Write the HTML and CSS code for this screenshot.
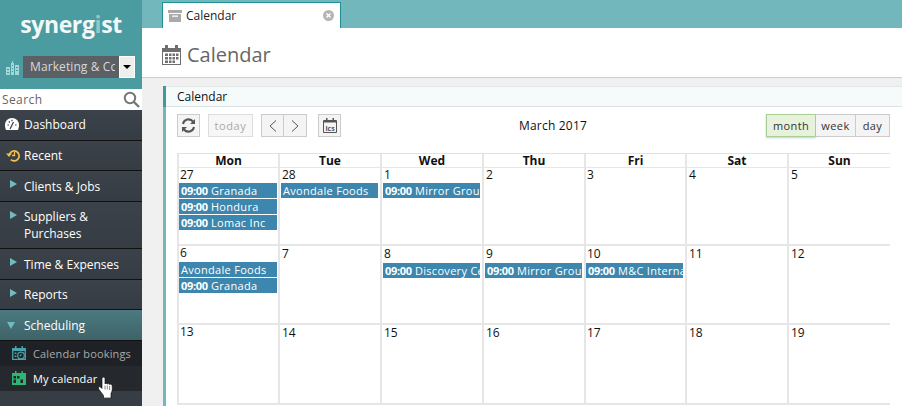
FILE: index.html
```html
<!DOCTYPE html>
<html lang="en">
<head>
<meta charset="utf-8">
<title>Calendar</title>
<link rel="stylesheet" href="styles.css">
</head>
<body>
<div class="app">
  <aside class="sidebar">
    <div class="brand">
      <div class="logo">synerg<span class="logo-i">i</span>st</div>
      <div class="company">
        <svg class="company-icon" width="13" height="14" viewBox="0 0 13 14"><path fill="#a5d5d6" d="M0 6h4v8H0zM5 2h1V0h1v2h1v12H5zM9 4h4v10H9z"/><path fill="#4a9ca0" d="M1 8h2v1H1zM1 11h2v1H1zM6 4h1v1H6zM6 7h1v1H6zM6 10h1v1H6zM10 6h2v1h-2zM10 9h2v1h-2z"/></svg>
        <div class="company-select"><span class="company-name">Marketing &amp; Cc</span><span class="company-arrow"><i></i></span></div>
      </div>
    </div>
    <div class="search">
      <span>Search</span>
      <svg width="17" height="17" viewBox="0 0 17 17"><circle cx="7" cy="7" r="5.2" fill="none" stroke="#777" stroke-width="2"/><path d="M11 11l5 5" stroke="#777" stroke-width="2.4"/></svg>
    </div>
    <nav class="nav">
      <a class="nav-item nav-first">
        <svg class="nav-icon" width="14" height="12" viewBox="0 0 14 12"><path fill="#fff" d="M7 0C3 0 0 3 0 7c0 2 .4 3.500 1 5h12c.6-1.500 1-3 1-5 0-4-3-7-7-7z"/><path d="M2.500 7h1.500M7 1.800v1.500M11.500 7H10M3.800 3.500l1 1M5 11l3.500-7" stroke="#373d44" stroke-width="1.200" fill="none"/></svg>
        <span>Dashboard</span>
      </a>
      <a class="nav-item nav-short">
        <svg class="nav-icon nav-icon-recent" width="14" height="13" viewBox="0 0 14 13"><path fill="none" stroke="#f2c14e" stroke-width="1.700" d="M3.500 5a5 5 0 1 1 1.300 5.700"/><path fill="#f2c14e" d="M0 4.500h6L3 8z"/><path fill="none" stroke="#f2c14e" stroke-width="1.300" d="M8.500 3v3.500H6"/></svg>
        <span>Recent</span>
      </a>
      <a class="nav-item"><i class="tri"></i><span>Clients &amp; Jobs</span></a>
      <a class="nav-item nav-tall"><i class="tri"></i><span>Suppliers &amp;<br>Purchases</span></a>
      <a class="nav-item"><i class="tri"></i><span>Time &amp; Expenses</span></a>
      <a class="nav-item nav-short"><i class="tri"></i><span>Reports</span></a>
      <a class="nav-item nav-open"><i class="tri-down"></i><span>Scheduling</span></a>
      <div class="subnav">
        <a class="sub-item">
          <svg width="14" height="14" viewBox="0 0 14 14"><path fill="none" stroke="#4aa3a8" stroke-width="1.300" d="M.7 2.700h12.600v10.600H.7z"/><path fill="#4aa3a8" d="M3 0h1.500v3H3zM9.500 0H11v3H9.500zM1 3h12v2H1z"/><path fill="#4aa3a8" d="M2.500 6.500h2v1.500h-2zM2.500 9.500h2V11h-2z"/><circle cx="9" cy="9.500" r="3.300" fill="#1e2126" stroke="#4aa3a8" stroke-width="1.200"/><path fill="none" stroke="#4aa3a8" d="M9 7.800v1.900H7.500"/></svg>
          <span>Calendar bookings</span>
        </a>
        <a class="sub-item sub-active">
          <svg width="14" height="14" viewBox="0 0 14 14"><path fill="#2fb574" d="M0 2h14v12H0z"/><path fill="#2fb574" d="M3 0h1.500v3H3zM9.500 0H11v3H9.500z"/><path fill="#23272c" d="M1.500 5h2.500v2.500H1.500zM5 5h2.500v2.500H5zM8.500 8.500H11V12H8.500zM1.500 8.500H4V12H1.500z"/></svg>
          <span>My calendar</span>
        </a>
      </div>
    </nav>
  </aside>
  <div class="main">
    <div class="tabbar">
      <div class="tab">
        <svg width="14" height="12" viewBox="0 0 14 12"><path fill="#aaa" d="M0 0h14v3H0zM1 4h12v8H1z"/><path fill="#fff" d="M4 5.500h6v1.300H4z"/></svg>
        <span class="tab-label">Calendar</span>
        <span class="tab-close">
          <svg width="11" height="11" viewBox="0 0 11 11"><circle cx="5.500" cy="5.500" r="5.500" fill="#b5b5b5"/><path d="M3.500 3.500l4 4M7.500 3.500l-4 4" stroke="#fff" stroke-width="1.400"/></svg>
        </span>
      </div>
    </div>
    <header class="page-head">
      <svg width="19" height="20" viewBox="0 0 19 20"><path fill="#6e6e6e" d="M0 3h19v17H0z"/><path fill="#6e6e6e" d="M3 0h3v4H3zM13 0h3v4h-3z"/><path fill="#fff" d="M1 7h17v12H1z"/><path fill="#6e6e6e" d="M3 8.500h3v2.500H3zM7 8.500h2.500v2.500H7zM10.500 8.500h2.500v2.500h-2.500zM14 8.500h2.500v2.500H14zM3 12h3v2.500H3zM7 12h2.500v2.500H7zM10.500 12h2.500v2.500h-2.500zM14 12h2.500v2.500H14zM3 15.500h3V18H3zM7 15.500h2.500V18H7zM10.500 15.500h2.500V18h-2.500z"/></svg>
      <h1>Calendar</h1>
    </header>
    <div class="content">
      <section class="panel">
        <div class="panel-head">Calendar</div>
        <div class="panel-body">
          <div class="toolbar">
            <div class="tools-left">
              <button class="btn btn-icon">
                <svg width="15" height="15" viewBox="0 0 15 15"><path fill="none" stroke="#555" stroke-width="2" d="M2 6a5.700 5.700 0 0 1 10-2.500M13 9a5.700 5.700 0 0 1-10 2.500"/><path fill="#555" d="M14 1v5H9zM1 14V9h5z"/></svg>
              </button>
              <button class="btn btn-today">today</button>
              <div class="btn-group">
                <button class="btn btn-icon"><svg width="8" height="12" viewBox="0 0 8 12"><path fill="none" stroke="#555" d="M7 .5L1 6l6 5.500"/></svg></button>
                <button class="btn btn-icon btn-joined"><svg width="8" height="12" viewBox="0 0 8 12"><path fill="none" stroke="#555" d="M1 .5L7 6l-6 5.500"/></svg></button>
              </div>
              <button class="btn btn-icon btn-ics">
                <svg width="14" height="15" viewBox="0 0 14 15"><path fill="none" stroke="#555" d="M.5 2.500h13v12H.5z"/><path fill="#555" d="M3 0h1.500v3H3zM9.500 0H11v3H9.500zM1 3h12v1.500H1z"/><text class="ics-text" x="7" y="12.500" text-anchor="middle">ics</text></svg>
              </button>
            </div>
            <div class="cal-title">March 2017</div>
            <div class="view-group">
              <button class="view view-active">month</button>
              <button class="view">week</button>
              <button class="view">day</button>
            </div>
          </div>
          <div class="cal">
            <div class="dow">Mon</div><div class="dow">Tue</div><div class="dow">Wed</div><div class="dow">Thu</div><div class="dow">Fri</div><div class="dow">Sat</div><div class="dow">Sun</div>

            <div class="day row-1"><div class="num">27</div><div class="ev"><b>09:00</b> Granada</div><div class="ev"><b>09:00</b> Hondura</div><div class="ev"><b>09:00</b> Lomac Inc</div></div>
            <div class="day row-1"><div class="num">28</div><div class="ev">Avondale Foods</div></div>
            <div class="day row-1"><div class="num">1</div><div class="ev"><b>09:00</b> Mirror Group</div></div>
            <div class="day row-1"><div class="num">2</div></div>
            <div class="day row-1"><div class="num">3</div></div>
            <div class="day row-1"><div class="num">4</div></div>
            <div class="day row-1"><div class="num">5</div></div>

            <div class="day row-2"><div class="num">6</div><div class="ev">Avondale Foods</div><div class="ev"><b>09:00</b> Granada</div></div>
            <div class="day row-2"><div class="num">7</div></div>
            <div class="day row-2"><div class="num">8</div><div class="ev"><b>09:00</b> Discovery Ce</div></div>
            <div class="day row-2"><div class="num">9</div><div class="ev"><b>09:00</b> Mirror Group</div></div>
            <div class="day row-2"><div class="num">10</div><div class="ev"><b>09:00</b> M&amp;C Interna</div></div>
            <div class="day row-2"><div class="num">11</div></div>
            <div class="day row-2"><div class="num">12</div></div>

            <div class="day row-3"><div class="num">13</div></div>
            <div class="day row-3"><div class="num">14</div></div>
            <div class="day row-3"><div class="num">15</div></div>
            <div class="day row-3"><div class="num">16</div></div>
            <div class="day row-3"><div class="num">17</div></div>
            <div class="day row-3"><div class="num">18</div></div>
            <div class="day row-3"><div class="num">19</div></div>
          </div>
        </div>
      </section>
    </div>
  </div>
</div>
<svg class="cursor" width="16" height="21" viewBox="0 0 16 21"><path fill="#fff" stroke="#000" stroke-width=".6" stroke-linejoin="round" d="M4 1.500c0-1.800 3-1.800 3 0V7c.5-1 2-1 2.300.2.500-.9 2-.8 2.300.4.500-.7 2.200-.5 2.400.7.600 3.200.3 6-1 8.200V21H5.500v-2.500L.6 12c-1-1.500.8-3 2.100-1.800L4 11.500z"/><path d="M7 8.500v4M9.300 8.500v4M11.600 9v4" stroke="#555" stroke-width=".7"/></svg>
</body>
</html>
```
FILE: styles.css
```css
* { box-sizing: border-box; }
html, body { margin: 0; padding: 0; height: 100%; overflow: hidden; }
body { font-family: "Open Sans", sans-serif; font-size: 12px; color: #222; position: relative; }
.app { display: flex; width: 902px; height: 406px; overflow: hidden; }

.sidebar { width: 142px; flex: none; background: #373d44; display: flex; flex-direction: column; }
.brand { height: 89px; background: #4a9ca0; padding-top: 8px; }
.logo { font-weight: 700; font-size: 23px; line-height: 32px; color: #f2f8f8; text-align: center; letter-spacing: -.4px; }
.logo-i { color: #8fc8ca; }
.company { display: flex; align-items: center; margin-top: 16px; padding-left: 6px; }
.company-icon { flex: none; margin-top: 2px; }
.company-select { display: flex; width: 112px; height: 22px; margin-left: 4px; background: #5b6065; }
.company-name { flex: 1; min-width: 0; overflow: hidden; white-space: nowrap; margin: 0 4px 0 7px; line-height: 22px; color: #d8d8d8; font-size: 12px; letter-spacing: .1px; }
.company-arrow { flex: none; width: 16px; background: #eee; border: 1px solid #fff; display: flex; align-items: center; justify-content: center; }
.company-arrow i { border: 4px solid transparent; border-top: 4px solid #000; border-bottom: 0; }

.search { height: 21px; background: #fff; display: flex; align-items: center; justify-content: space-between; padding: 0 2px; color: #666; font-size: 12px; letter-spacing: .4px; }

.nav { display: flex; flex-direction: column; flex: 1; color: #fff; }
.nav-item { display: flex; align-items: center; height: 31px; padding-left: 24px; position: relative; border-bottom: 1px solid #111; font-size: 12px; background: linear-gradient(#3c4249, #363c43); }
.nav-first { padding-bottom: 1px; }
.nav-tall { height: 47px; line-height: 17px; }
.nav-short { height: 30px; padding-bottom: 1px; }
.nav-icon { position: absolute; left: 5px; top: 8px; }
.nav-icon-recent { left: 6px; }
.tri { position: absolute; left: 10px; top: 9px; border: 4.500px solid transparent; border-left: 7px solid #6fbcc0; border-right: 0; }
.tri-down { position: absolute; left: 7px; top: 12px; border: 4.500px solid transparent; border-top: 7px solid #6fbcc0; border-bottom: 0; }
.nav-open { background: linear-gradient(#4b7a80, #3e6368); }
.subnav { display: flex; flex-direction: column; }
.sub-item { display: flex; align-items: center; height: 25px; padding: 0 0 1px 12px; gap: 7px; background: #1e2126; color: #aaa; font-size: 11px; letter-spacing: .15px; white-space: nowrap; }
.sub-active { background: #25292e; color: #fff; }

.main { flex: 1; min-width: 0; display: flex; flex-direction: column; background: #f0f0f0; }
.tabbar { height: 28px; background: #71b7bb; padding: 2px 0 0 20px; flex: none; }
.tab { width: 179px; height: 26px; background: #fff; border: 1px solid #1c9298; border-bottom: 0; display: flex; align-items: center; padding: 0 6px 0 5px; gap: 4px; color: #222; }
.tab-label { flex: 1; font-size: 12px; }
.tab-close { display: flex; }

.page-head { height: 50px; flex: none; background: #fff; border-bottom: 1px solid #c9cdd4; display: flex; align-items: center; gap: 6px; padding: 4px 0 0 20px; }
.page-head h1 { margin: 0; font-size: 20px; font-weight: 400; color: #666; }

.content { flex: 1; min-height: 0; padding: 8px 0 0 21px; }
.panel { background: #fff; border-left: 3px solid #71b7bb; height: 100%; }
.panel-head { height: 21px; background: #f5fbfb; border-top: 1px solid #e4e8e8; border-bottom: 1px solid #dfe3e3; padding-left: 11px; line-height: 19px; font-size: 12px; color: #111; position: relative; }
.panel-head::before { content: ""; position: absolute; left: -3px; top: -1px; width: 3px; height: 21px; background: #3f999e; }
.panel-body { padding: 7px 12px 0 11px; }

.toolbar { display: flex; align-items: center; justify-content: space-between; height: 23px; position: relative; }
.tools-left { display: flex; gap: 8px; align-items: stretch; }
.btn { height: 23px; border: 1px solid #ccc; background: #f4f4f4; padding: 0; display: flex; align-items: center; justify-content: center; font-family: inherit; }
.btn-icon { width: 23px; }
.btn-today { width: 45px; color: #aaa; font-size: 11px; letter-spacing: .6px; background: #f7f7f7; border-color: #ddd; }
.btn-group { display: flex; }
.btn-joined { border-left: 0; }
.btn-ics { margin-left: 3px; }
.ics-text { font-size: 7px; font-weight: 700; fill: #555; }
.cal-title { position: absolute; left: 342px; top: 3px; font-size: 12px; color: #111; letter-spacing: .2px; }
.view-group { display: flex; }
.view { height: 23px; border: 1px solid #ccc; border-left: 0; background: #f4f4f4; padding: 0; font-family: inherit; font-size: 11px; color: #333; letter-spacing: .4px; }
.view:nth-child(1) { width: 50px; border: 1px solid #a9cf94; background: #e6f2dc; box-shadow: 0 1px 2px #bcd; }
.view:nth-child(2) { width: 40px; }
.view:nth-child(3) { width: 34px; }

.cal { display: grid; grid-template-columns: 101px 102px 102px 102px 101px 102px 103px; margin-top: 16px; width: 713px; border-top: 1px solid #e2e2e2; }
.dow { height: 14px; line-height: 14px; text-align: center; font-weight: 700; font-size: 12px; color: #111; border-left: 2px solid #e6e6e6; border-bottom: 1px solid #e6e6e6; }
.day { border-left: 2px solid #e6e6e6; border-bottom: 2px solid #e6e6e6; padding: 0 2px 0 1px; min-width: 0; }
.day:nth-child(7n+1) { padding: 0 1px 0 0; }
.day:nth-child(7n+5) { padding-left: 0; }
.row-1 { height: 78px; }
.row-2 { height: 79px; padding-top: 1px; }
.row-3 { height: 80px; padding-top: 1px; }
.num { height: 15px; line-height: 14px; font-size: 12px; color: #111; padding-left: 1px; }
.row-2 .num, .row-3 .num { height: 16px; }
.ev { height: 15px; line-height: 15px; margin-bottom: 1px; background: #3d86ad; color: #fff; font-size: 11px; padding-left: 2px; white-space: nowrap; overflow: hidden; letter-spacing: .3px; }
.ev b { font-weight: 700; letter-spacing: -.3px; }

.cursor { position: absolute; left: 98px; top: 377px; }
```
